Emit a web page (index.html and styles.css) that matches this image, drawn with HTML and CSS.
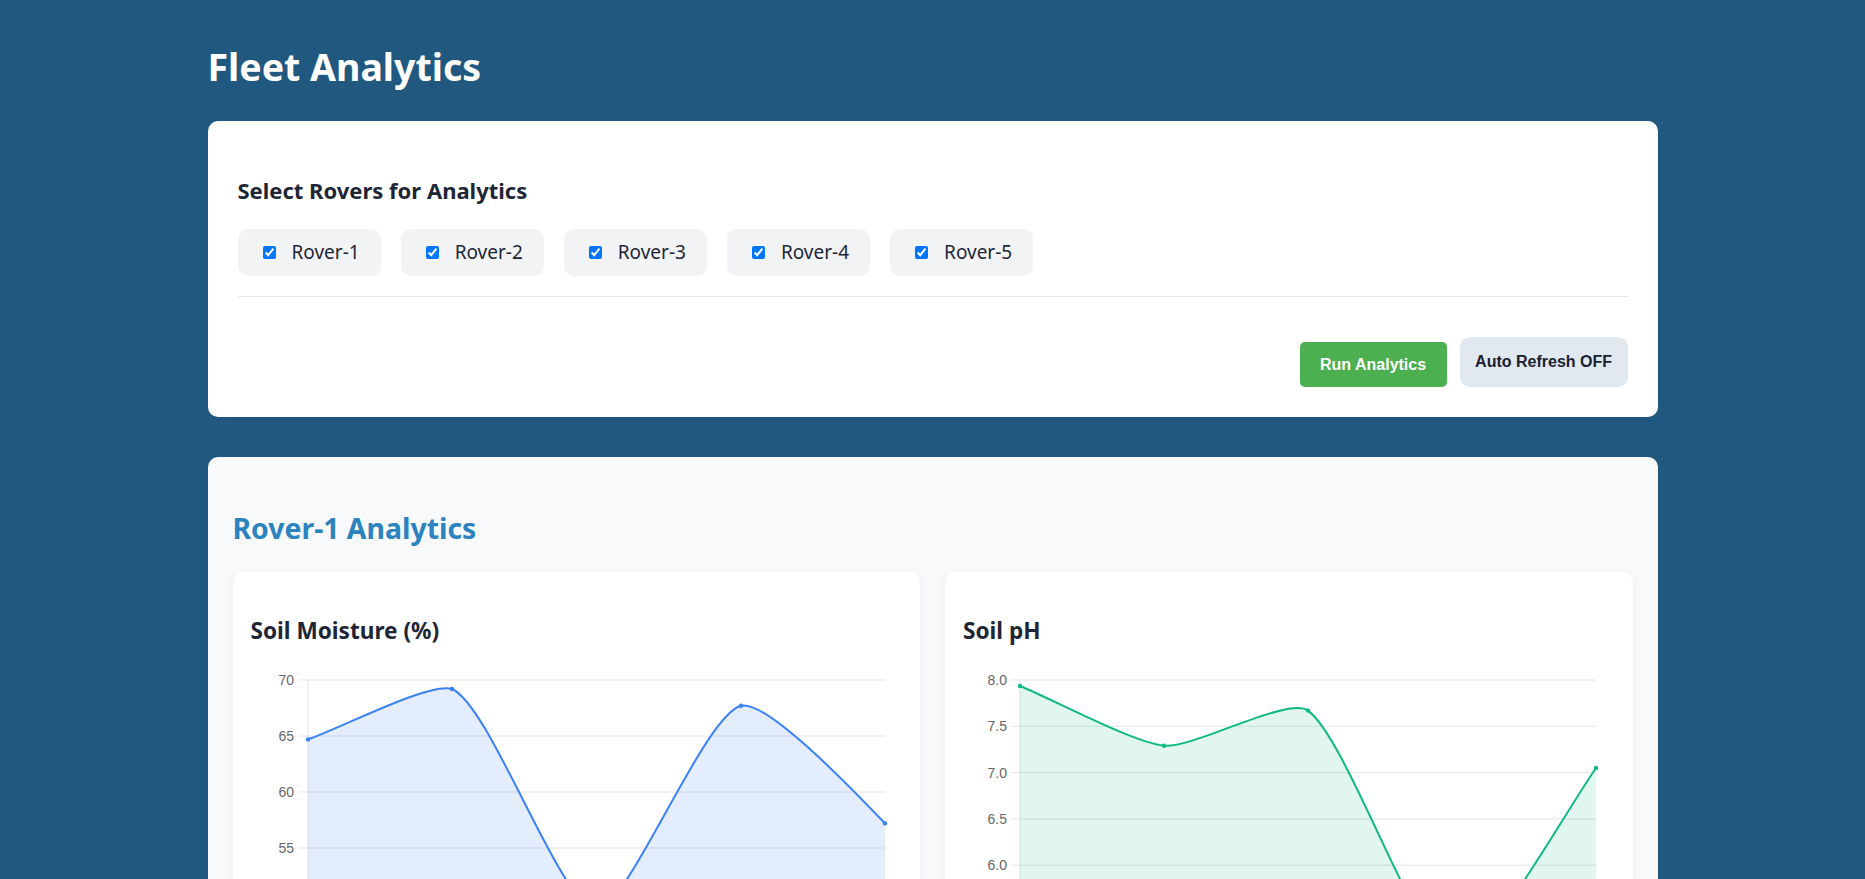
FILE: index.html
```html
<!DOCTYPE html>
<html lang="en">
<head>
<meta charset="utf-8">
<title>Fleet Analytics</title>
<link rel="stylesheet" href="styles.css">
</head>
<body>
<div class="container">
  <h1 class="page-title">Fleet Analytics</h1>

  <section class="card controls">
    <h3 class="section-title">Select Rovers for Analytics</h3>
    <div class="rover-list">
      <label class="rover-chip"><input type="checkbox" checked><span>Rover-1</span></label>
      <label class="rover-chip"><input type="checkbox" checked><span>Rover-2</span></label>
      <label class="rover-chip"><input type="checkbox" checked><span>Rover-3</span></label>
      <label class="rover-chip"><input type="checkbox" checked><span>Rover-4</span></label>
      <label class="rover-chip"><input type="checkbox" checked><span>Rover-5</span></label>
    </div>
    <hr class="divider">
    <div class="actions">
      <button class="btn btn-run">Run Analytics</button>
      <button class="btn btn-refresh">Auto Refresh OFF</button>
    </div>
  </section>

  <section class="card results">
    <h2 class="rover-title">Rover-1 Analytics</h2>
    <div class="chart-grid">
      <div class="chart-card">
        <h3 class="chart-title">Soil Moisture (%)</h3>
        <svg class="chart" width="650" height="215" viewBox="0 0 650 215">
          <g class="grid">
            <line x1="48" y1="10" x2="634" y2="10"/>
            <line x1="48" y1="66" x2="634" y2="66"/>
            <line x1="48" y1="122" x2="634" y2="122"/>
            <line x1="48" y1="178" x2="634" y2="178"/>
            <line x1="48" y1="234" x2="634" y2="234"/>
            <line x1="57" y1="10" x2="57" y2="260"/>
          </g>
          <g class="ticks">
            <text x="43" y="15">70</text>
            <text x="43" y="71">65</text>
            <text x="43" y="127">60</text>
            <text x="43" y="183">55</text>
          </g>
          <path class="fill-blue" d="M57,69.4 C93,56.8 178,12 201,19 C240,36 310,237.4 345,239.6 C376,241.6 452,46 490,35.8 C515,29 602,120 634,153.4 L634,400 L57,400 Z"/>
          <path class="line-blue" d="M57,69.4 C93,56.8 178,12 201,19 C240,36 310,237.4 345,239.6 C376,241.6 452,46 490,35.8 C515,29 602,120 634,153.4"/>
          <g class="dots-blue">
            <circle cx="57" cy="69.4" r="2.2"/>
            <circle cx="201" cy="19" r="2.2"/>
            <circle cx="345" cy="239.6" r="2.2"/>
            <circle cx="490" cy="35.8" r="2.2"/>
            <circle cx="634" cy="153.4" r="2.2"/>
          </g>
        </svg>
      </div>
      <div class="chart-card">
        <h3 class="chart-title">Soil pH</h3>
        <svg class="chart" width="650" height="215" viewBox="0 0 650 215">
          <g class="grid">
            <line x1="48" y1="10" x2="633" y2="10"/>
            <line x1="48" y1="56.3" x2="633" y2="56.3"/>
            <line x1="48" y1="102.6" x2="633" y2="102.6"/>
            <line x1="48" y1="148.9" x2="633" y2="148.9"/>
            <line x1="48" y1="195.2" x2="633" y2="195.2"/>
            <line x1="48" y1="241.5" x2="633" y2="241.5"/>
            <line x1="57" y1="10" x2="57" y2="260"/>
          </g>
          <g class="ticks">
            <text x="44" y="15">8.0</text>
            <text x="44" y="61.3">7.5</text>
            <text x="44" y="107.6">7.0</text>
            <text x="44" y="153.9">6.5</text>
            <text x="44" y="200.2">6.0</text>
          </g>
          <path class="fill-green" d="M57,16 C93,30.9 170,72.5 201,75.7 C230,78.7 325,26 345,40.6 C385,70 455,280 490,287.8 C518,294 600,145.5 633,98 L633,400 L57,400 Z"/>
          <path class="line-green" d="M57,16 C93,30.9 170,72.5 201,75.7 C230,78.7 325,26 345,40.6 C385,70 455,280 490,287.8 C518,294 600,145.5 633,98"/>
          <g class="dots-green">
            <circle cx="57" cy="16" r="2.2"/>
            <circle cx="201" cy="75.7" r="2.2"/>
            <circle cx="345" cy="40.6" r="2.2"/>
            <circle cx="490" cy="287.8" r="2.2"/>
            <circle cx="633" cy="98" r="2.2"/>
          </g>
        </svg>
      </div>
    </div>
  </section>
</div>
</body>
</html>
```

FILE: styles.css
```css
* { box-sizing: border-box; }

html, body {
  margin: 0;
  padding: 0;
}

body {
  background: #215880;
  font-family: "Noto Sans", "Open Sans", sans-serif;
  color: #1e2636;
}

.container {
  width: 1450px;
  margin: 0 auto;
  padding: 43px 0 40px;
}

.page-title {
  margin: 0 0 30px;
  font-size: 37.5px;
  line-height: 48px;
  font-weight: 700;
  color: #ffffff;
}

.card {
  border-radius: 10px;
}

.controls {
  background: #ffffff;
  padding: 30px;
}

.section-title {
  margin: 25px 0 25px;
  font-size: 22px;
  line-height: 28px;
  font-weight: 700;
  color: #1e2636;
}

.rover-list {
  display: flex;
  gap: 20px;
}

.rover-chip {
  display: flex;
  align-items: center;
  background: #f2f3f5;
  border-radius: 10px;
  padding: 12px 21px 12px 20px;
  font-size: 19px;
  line-height: 23px;
  color: #1e2636;
}

.rover-chip input {
  width: 13px;
  height: 13px;
  margin: 0 16px 0 5px;
}

.divider {
  border: 0;
  border-top: 1px solid #e2e6ec;
  margin: 20px 0 40px;
}

.actions {
  display: flex;
  justify-content: flex-end;
  align-items: flex-end;
  gap: 13px;
}

.btn {
  border: 0;
  font-family: "Liberation Sans", Arial, sans-serif;
  font-weight: 700;
  font-size: 16px;
  line-height: 18px;
}

.btn-run {
  height: 45px;
  padding: 0 20.5px;
  background: #4caf50;
  color: #ffffff;
  border-radius: 5px;
}

.btn-refresh {
  height: 50px;
  padding: 0 15.5px;
  background: #e2e8f0;
  color: #1a2030;
  border-radius: 10px;
}

.results {
  margin-top: 40px;
  background: #f8f9fa;
  padding: 25px;
}

.rover-title {
  margin: 28px 0 26px;
  font-size: 28.4px;
  line-height: 36px;
  font-weight: 700;
  color: #2b83bf;
}

.chart-grid {
  display: grid;
  grid-template-columns: 1fr 1fr;
  gap: 25px;
}

.chart-card {
  background: #ffffff;
  border-radius: 10px;
  padding: 18px;
  box-shadow: 0 2px 8px rgba(0, 0, 0, 0.06);
}

.chart-title {
  margin: 26px 0 24px;
  font-size: 22.6px;
  line-height: 30px;
  font-weight: 700;
  color: #1e2636;
}

.chart {
  display: block;
  overflow: hidden;
}

.grid line {
  stroke: #e4e4e4;
  stroke-width: 1;
}

.ticks text {
  font-family: "Liberation Sans", Arial, sans-serif;
  font-size: 14px;
  fill: #666666;
  text-anchor: end;
}

.fill-blue { fill: rgba(59, 130, 246, 0.14); stroke: none; }
.line-blue { fill: none; stroke: #3b82f6; stroke-width: 2; }
.dots-blue circle { fill: #3b82f6; }

.fill-green { fill: rgba(16, 185, 129, 0.13); stroke: none; }
.line-green { fill: none; stroke: #10b981; stroke-width: 2; }
.dots-green circle { fill: #10b981; }
```
